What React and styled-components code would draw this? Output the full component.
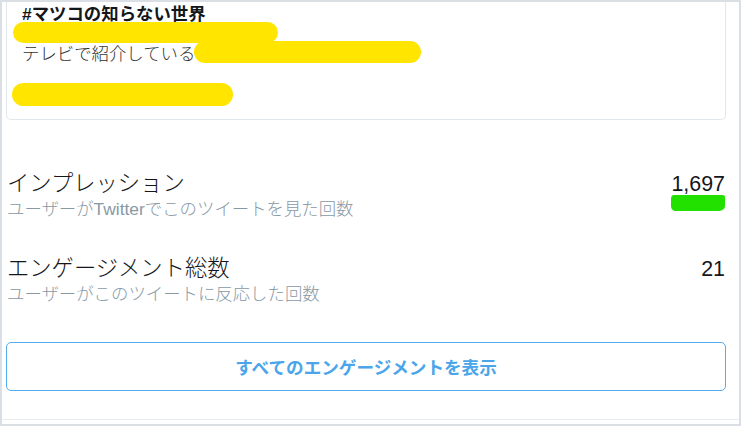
import React from 'react';
import styled, { createGlobalStyle } from 'styled-components';

const GlobalStyle = createGlobalStyle`
  html, body {
    margin: 0;
    padding: 0;
    background: #d9dfe5;
    font-family: "Liberation Sans", "Noto Sans CJK JP", sans-serif;
  }
`;

const Frame = styled.div`
  width: 741px;
  height: 426px;
  padding: 2px;
  box-sizing: border-box;
  overflow: hidden;
`;

const Panel = styled.div`
  height: 422px;
  background: #fff;
  box-sizing: border-box;
  padding: 0 13px 0 4px;
  border-bottom: 4px solid #fff;
  display: flex;
  flex-direction: column;
`;

const TweetCard = styled.div`
  border: 1px solid #e1e8ed;
  border-top: none;
  border-radius: 0 0 5px 5px;
  padding: 2px 15px 15px 15px;
  color: #14171a;
  font-size: 17.4px;
`;

const Line = styled.div`
  position: relative;
  height: 20px;
  line-height: 20px;
  white-space: nowrap;
  font-weight: ${({ bold }) => (bold ? 700 : 300)};
  color: ${({ bold }) => (bold ? '#14171a' : '#333')};
`;

// yellow redaction pills laid over the tweet text
const Redact = styled.span`
  position: absolute;
  background: #ffe500;
  border-radius: 12px;
`;

const Stats = styled.div`
  margin-top: 50px;
  display: flex;
  flex-direction: column;
  gap: 35px;
`;

const StatRow = styled.div`
  display: flex;
  justify-content: space-between;
  align-items: flex-start;
`;

const StatText = styled.div`
  display: flex;
  flex-direction: column;
`;

const StatLabel = styled.div`
  font-size: 22.3px;
  line-height: 28px;
  font-weight: 300;
  color: #14171a;
  margin-left: 1px;
`;

const StatHint = styled.div`
  font-size: 17.4px;
  line-height: 22px;
  font-weight: 300;
  color: #8899a6;
  margin-left: 1px;
`;

const StatValue = styled.div`
  position: relative;
  font-size: 21.4px;
  line-height: 28px;
  color: #14171a;
  margin-right: 1px;
`;

const Marker = styled.span`
  position: absolute;
  left: 0;
  right: 0;
  top: 25px;
  height: 16px;
  background: #22e000;
  border-radius: 3px 3px 6px 4px / 4px 2px 5px 5px;
`;

const ShowAllButton = styled.button`
  margin-top: 37px;
  height: 49px;
  width: 100%;
  box-sizing: border-box;
  border: 1px solid #55acee;
  border-radius: 5px;
  background: #fff;
  color: #4aa5ea;
  font-family: inherit;
  font-size: 17.6px;
  font-weight: 700;
  cursor: pointer;
`;

const Divider = styled.div`
  margin-top: auto;
  margin-left: -4px;
  margin-right: -13px;
  height: 1px;
  background: #e6ecf0;
`;

export default function App() {
  return (
    <>
      <GlobalStyle />
      <Frame>
        <Panel>
          <TweetCard>
            <Line bold>#マツコの知らない世界</Line>
            <Line>
              <Redact style={{ left: -9, top: -2, width: 265, height: 21 }} />
            </Line>
            <Line>
              テレビで紹介している
              <Redact style={{ left: 172, top: -3, width: 227, height: 22 }} />
            </Line>
            <Line />
            <Line>
              <Redact style={{ left: -10, top: -1, width: 221, height: 23 }} />
            </Line>
          </TweetCard>

          <Stats>
            <StatRow>
              <StatText>
                <StatLabel>インプレッション</StatLabel>
                <StatHint>ユーザーがTwitterでこのツイートを見た回数</StatHint>
              </StatText>
              <StatValue>
                1,697
                <Marker />
              </StatValue>
            </StatRow>
            <StatRow>
              <StatText>
                <StatLabel>エンゲージメント総数</StatLabel>
                <StatHint>ユーザーがこのツイートに反応した回数</StatHint>
              </StatText>
              <StatValue>21</StatValue>
            </StatRow>
          </Stats>

          <ShowAllButton>すべてのエンゲージメントを表示</ShowAllButton>
          <Divider />
        </Panel>
      </Frame>
    </>
  );
}
